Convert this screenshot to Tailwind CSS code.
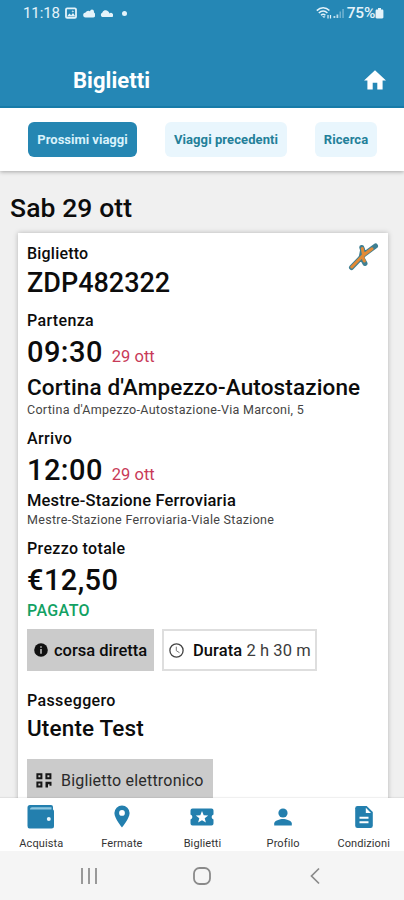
<!DOCTYPE html>
<html lang="it">
<head>
<meta charset="utf-8">
<meta name="viewport" content="width=device-width, initial-scale=1">
<title>Biglietti</title>
<script src="https://cdn.jsdelivr.net/npm/@tailwindcss/browser@4"></script>
</head>
<body class="flex h-[900px] w-[404px] flex-col overflow-hidden bg-[#f0f0f0] font-['Roboto',sans-serif] text-[#0c0c0c]">
  <header class="relative z-10 h-[108px] shrink-0 border-b-2 border-[#177ba8] bg-[#2587b5] text-white">
    <div class="flex h-[26px] items-center pl-[23px] pr-[20px] text-[#e4f3fa]">
      <span class="w-[42px] whitespace-nowrap text-[15px] leading-[26px] tracking-[-0.1px]">11:18</span>
      <svg class="h-[12px] w-[12px]" viewBox="0 0 12 12" fill="none" stroke="currentColor" stroke-width="1.8"><rect x="1" y="1.3" width="10" height="9.6" rx="1.2"/><path d="M2 9.500l2.400-3 1.800 1.800L8 6l2.400 3.500z" fill="currentColor" stroke="none"/><circle cx="7.800" cy="4.400" r=".5" stroke-width="1"/></svg>
      <svg class="ml-[6px] h-[9px] w-[12px]" viewBox="0 0 12 9" fill="currentColor"><path d="M2.8 8.5a2.5 2.5 0 0 1-.3-5A3.6 3.6 0 0 1 7 2.2 3 3 0 0 1 11.4 4 2.5 2.5 0 0 1 9.5 8.5z"/><circle cx="9" cy="2.4" r="1.9"/></svg>
      <svg class="ml-[5px] h-[9px] w-[13px]" viewBox="0 0 13 9" fill="currentColor"><path d="M2.2 8a2.300 2.300 0 0 1 0-4.200A3.500 3.500 0 0 1 8 2.200c.9.6 1.200 1.400 1.400 2.200A2.200 2.200 0 0 1 12.300 8z"/></svg>
      <span class="ml-[9px] h-[5px] w-[5px] rounded-full bg-current"></span>
      <svg class="ml-auto h-[14px] w-[17px]" viewBox="0 0 17 14" fill="none" stroke="currentColor" stroke-width="1.5"><path d="M.8 4.6c3.8-3.8 9-3.8 12.600 0M2.800 7c2.700-2.700 6-2.700 8.600 0M5 9.300c1.300-1.300 3-1.300 4.400 0"/><path d="M6 10l2 2 1.500-1.500z" fill="currentColor" stroke="none"/><path d="M12 9v3.500M14.500 9v3.500" stroke-width="1.200"/></svg>
      <svg class="h-[12px] w-[12px]" viewBox="0 0 12 12" fill="currentColor"><path d="M.5 9h1.800v2H.5zM3.500 7.500h1.800V11H3.500z" opacity=".8"/><path d="M6.500 4.500h1.500V11H6.500zM9.300 2h1.500v9H9.300z" opacity=".4"/></svg>
      <span class="ml-[2px] text-[15.500px] font-medium leading-[26px] tracking-[-0.300px]">75%</span>
      <svg class="h-[12px] w-[9px]" viewBox="0 0 9 12" fill="currentColor"><path d="M3 1h3v1.500h1.200c.7 0 1.200.5 1.200 1.200v6.600c0 .7-.5 1.200-1.200 1.200H1.800c-.7 0-1.200-.5-1.200-1.200V3.700c0-.7.500-1.200 1.200-1.200H3z"/></svg>
    </div>
    <div class="flex h-[80px] items-center justify-between pl-[73px] pr-[18px] pt-[28px]">
      <h1 class="pt-[2px] text-[22px] font-bold leading-[28px] tracking-[0.050px]">Biglietti</h1>
      <svg class="h-[20px] w-[22px]" viewBox="0 0 22 20" fill="currentColor"><path d="M8.700 19.500v-6.700h4.600v6.700h5.300v-9.100H22L11 .2 0 10.400h3.400v9.100z"/></svg>
    </div>
  </header>

  <nav class="flex h-[63px] shrink-0 items-center justify-between bg-white pl-[28px] pr-[27px] text-[13px] font-bold text-[#238099] shadow-[0_1px_4px_rgba(0,0,0,0.3)]">
    <a class="flex h-[35px] w-[109px] items-center justify-center rounded-[6px] bg-[#2586b2] pt-px text-[#d9f2fb]">Prossimi viaggi</a>
    <a class="flex h-[35px] w-[122px] items-center justify-center rounded-[6px] bg-[#e9f6fd] pt-px tracking-[0.080px]">Viaggi precedenti</a>
    <a class="flex h-[35px] w-[62px] items-center justify-center rounded-[6px] bg-[#e9f6fd] pt-px tracking-[0.080px]">Ricerca</a>
  </nav>

  <main class="min-h-0 flex-1 overflow-hidden pl-[18px] pr-[16px] pt-[20px]">
    <h2 class="-ml-[8px] h-[42px] text-[26.500px] font-medium leading-[34px] tracking-[0.100px]">Sab 29 ott</h2>
    <section class="relative flex h-[600px] flex-col items-start whitespace-nowrap bg-white pl-[9px] pt-[12px] shadow-[0_0_5px_rgba(0,0,0,0.25)]">
      <svg class="absolute right-[9px] top-[8px] h-[31px] w-[32px]" viewBox="0 0 32 31" stroke-linejoin="round" stroke-linecap="round" fill="none"><path d="M4.500 26.500L17 13.500M17 13.500L28.500 5M14.800 6.500L16.500 12 15 17 18 22.500" stroke="#3f7f92" stroke-width="5"/><path d="M13.500 7L16 4.500 19 10.500 16.500 19.500 11.500 17z" fill="#3f7f92"/><path d="M4.800 26L16 14.500M16 14.500L25 7.800M15.300 7.500L16.300 13 16 17 17.300 20" stroke="#e28a36" stroke-width="3"/></svg>
      <p class="text-[16px] font-medium leading-[18px] tracking-[0.200px]">Biglietto</p>
      <p class="mt-[4px] text-[27px] font-medium leading-[32px]">ZDP482322</p>
      <p class="mt-[13px] text-[16px] font-medium leading-[18px] tracking-[0.350px]">Partenza</p>
      <p class="mt-[6px] flex h-[32px] items-baseline"><span class="text-[29px] font-medium leading-[32px] tracking-[0.450px]">09:30</span><span class="ml-[9px] text-[16.500px] text-[#c83a58]">29 ott</span></p>
      <p class="mt-[7px] text-[22.500px] font-medium leading-[24px] tracking-[0.130px]">Cortina d'Ampezzo-Autostazione</p>
      <p class="mt-[4px] text-[12.500px] leading-[14px] tracking-[0.300px] text-[#444]">Cortina d'Ampezzo-Autostazione-Via Marconi, 5</p>
      <p class="mt-[13px] text-[16px] font-medium leading-[18px] tracking-[0.400px]">Arrivo</p>
      <p class="mt-[6px] flex h-[32px] items-baseline"><span class="text-[29px] font-medium leading-[32px] tracking-[0.450px]">12:00</span><span class="ml-[9px] text-[16.500px] text-[#c83a58]">29 ott</span></p>
      <p class="mt-[6px] text-[16.500px] font-medium leading-[18px] tracking-[0.170px]">Mestre-Stazione Ferroviaria</p>
      <p class="mt-[3px] text-[12.500px] leading-[14px] tracking-[0.300px] text-[#444]">Mestre-Stazione Ferroviaria-Viale Stazione</p>
      <p class="mt-[13px] text-[16px] font-medium leading-[18px] tracking-[0.330px]">Prezzo totale</p>
      <p class="mt-[6px] text-[29px] font-medium leading-[32px] tracking-[0.400px]">€12,50</p>
      <p class="mt-[6px] text-[16px] font-medium leading-[18px] tracking-[0.400px] text-[#12a163]">PAGATO</p>
      <div class="mt-[9px] flex h-[42px] gap-[8px] text-[16.500px]">
        <div class="flex w-[127px] items-center bg-[#cbcbcb] pl-[7px] font-medium">
          <svg class="mr-[6px] h-[14px] w-[14px] shrink-0" viewBox="0 0 14 14"><circle cx="7" cy="7" r="6.800" fill="#111"/><path d="M6.200 3.200h1.600v1.500H6.200zM6.200 6h1.600v4.800H6.200z" fill="#bbb"/></svg>
          <span class="pt-[2px] leading-[24px]">corsa diretta</span>
        </div>
        <div class="flex w-[155px] items-center border-[2px] border-[#dedede] bg-white pl-[5px] tracking-[0.080px]">
          <svg class="mr-[9px] h-[15px] w-[15px] shrink-0" viewBox="0 0 15 15" fill="none" stroke="#444" stroke-width="1.300"><circle cx="7.500" cy="7.500" r="6.600"/><path d="M7.300 3.700v4l3.200 2" stroke="#777" stroke-width="1"/></svg>
          <span class="pt-[2px] leading-[24px] text-[#3c3c3c]"><b class="font-medium text-[#0c0c0c]">Durata</b> 2 h 30 m</span>
        </div>
      </div>
      <p class="mt-[21px] text-[16px] font-medium leading-[18px] tracking-[0.380px]">Passeggero</p>
      <p class="mt-[6px] text-[22.500px] font-medium leading-[24px] tracking-[0.150px]">Utente Test</p>
      <a class="mt-[19px] flex h-[42px] w-[186px] shrink-0 items-center bg-[#cbcbcb] pl-[9px] text-[16px] tracking-[0.200px] text-[#2a2a2a]">
        <svg class="mr-[9px] h-[15px] w-[16px] shrink-0" viewBox="0 0 16 15"><g fill="none" stroke="#161616" stroke-width="2"><path d="M1.400 1.200h4v4h-4zM10.400 1.200h4v4h-4zM1.400 9.600h4v4h-4z"/></g><path d="M9.500 8.700h6v4h-2v-1.500h-1.500v3.300H9.500z" fill="#161616"/></svg>
        <span class="pt-[2px] leading-[24px]">Biglietto elettronico</span>
      </a>
    </section>
  </main>

  <nav class="z-10 grid h-[53px] shrink-0 grid-cols-5 bg-white pl-px text-[11px] leading-[13px] text-[#333] shadow-[0_-1px_1px_rgba(0,0,0,0.06)]">
    <a class="flex flex-col items-center pt-[7px]"><svg class="h-[25px] w-[28px]" viewBox="0 0 28 25"><path d="M3 0h21q2 0 2 2v2.500q1 .5 1 2V21q0 2.500-2.500 2.500h-22Q.5 23.500.5 21V2.500Q.5 0 3 0z" fill="#237fae"/><path d="M3 4q.2-1.800 2-1.800h19.500V4.500H3z" fill="#8fc7e0"/><circle cx="21.800" cy="14" r="2" fill="#e8f6fc"/></svg><span class="mt-[7px] tracking-[0.100px]">Acquista</span></a>
    <a class="flex flex-col items-center pt-[7px]"><svg class="h-[25px] w-[16px]" viewBox="0 0 16 25"><path d="M8 .5a7.600 7.600 0 0 0-7.600 7.600C.4 13.500 8 22.500 8 22.500s7.600-9 7.600-14.400A7.600 7.600 0 0 0 8 .5zm0 10.300a2.900 2.900 0 1 1 0-5.800 2.900 2.900 0 0 1 0 5.800z" fill="#237fae"/></svg><span class="mt-[7px] tracking-[0.100px]">Fermate</span></a>
    <a class="flex flex-col items-center pt-[7px]"><svg class="h-[25px] w-[24px]" viewBox="0 0 24 25"><path d="M2.500 3.500h19q2 0 2 2v4a2.600 2.600 0 0 0 0 5v4q0 2-2 2h-19q-2 0-2-2v-4a2.600 2.600 0 0 0 0-5v-4q0-2 2-2z" fill="#237fae"/><path d="M12 6l1.700 4.200 4.500.2-3.500 2.900 1.200 4.300-3.900-2.400-3.900 2.400 1.200-4.300-3.500-2.900 4.500-.2z" fill="#fff"/></svg><span class="mt-[7px] tracking-[0.100px]">Biglietti</span></a>
    <a class="flex flex-col items-center pt-[7px]"><svg class="h-[25px] w-[18px]" viewBox="0 0 18 25"><circle cx="9" cy="8" r="4.600" fill="#237fae"/><path d="M.2 20.500v-2c0-3 5.800-4.500 8.800-4.500s8.800 1.500 8.800 4.500v2z" fill="#237fae"/></svg><span class="mt-[7px] tracking-[0.100px]">Profilo</span></a>
    <a class="flex flex-col items-center pt-[7px]"><svg class="h-[25px] w-[18px]" viewBox="0 0 18 25"><path d="M2.500 1h9.200L17.800 7v13.800q0 2.200-2.200 2.200H2.500Q.2 23 .2 20.800V3.200Q.2 1 2.500 1z" fill="#237fae"/><path d="M10.800 2.700v5.200H16z" fill="#fff"/><path d="M4.500 12.700h9M4.500 17.300h9" stroke="#fff" stroke-width="2"/></svg><span class="mt-[7px] tracking-[0.100px]">Condizioni</span></a>
  </nav>
  <footer class="z-10 flex h-[49px] shrink-0 items-center bg-[#f5f5f5] pl-[81px]">
    <svg class="h-[18px] w-[16px]" viewBox="0 0 16 18" fill="none" stroke="#909090" stroke-width="1.800"><path d="M1 1v16M8 1v16M15 1v16"/></svg>
    <svg class="ml-[96px] h-[18px] w-[18px]" viewBox="0 0 18 18" fill="none" stroke="#8a8a8a" stroke-width="1.800"><rect x="1" y="1" width="16" height="16" rx="5.500"/></svg>
    <svg class="ml-[99px] h-[18px] w-[10px]" viewBox="0 0 10 18" fill="none" stroke="#8a8a8a" stroke-width="1.700"><path d="M9 1.500L1.500 9 9 16.500"/></svg>
  </footer>
</body>
</html>
